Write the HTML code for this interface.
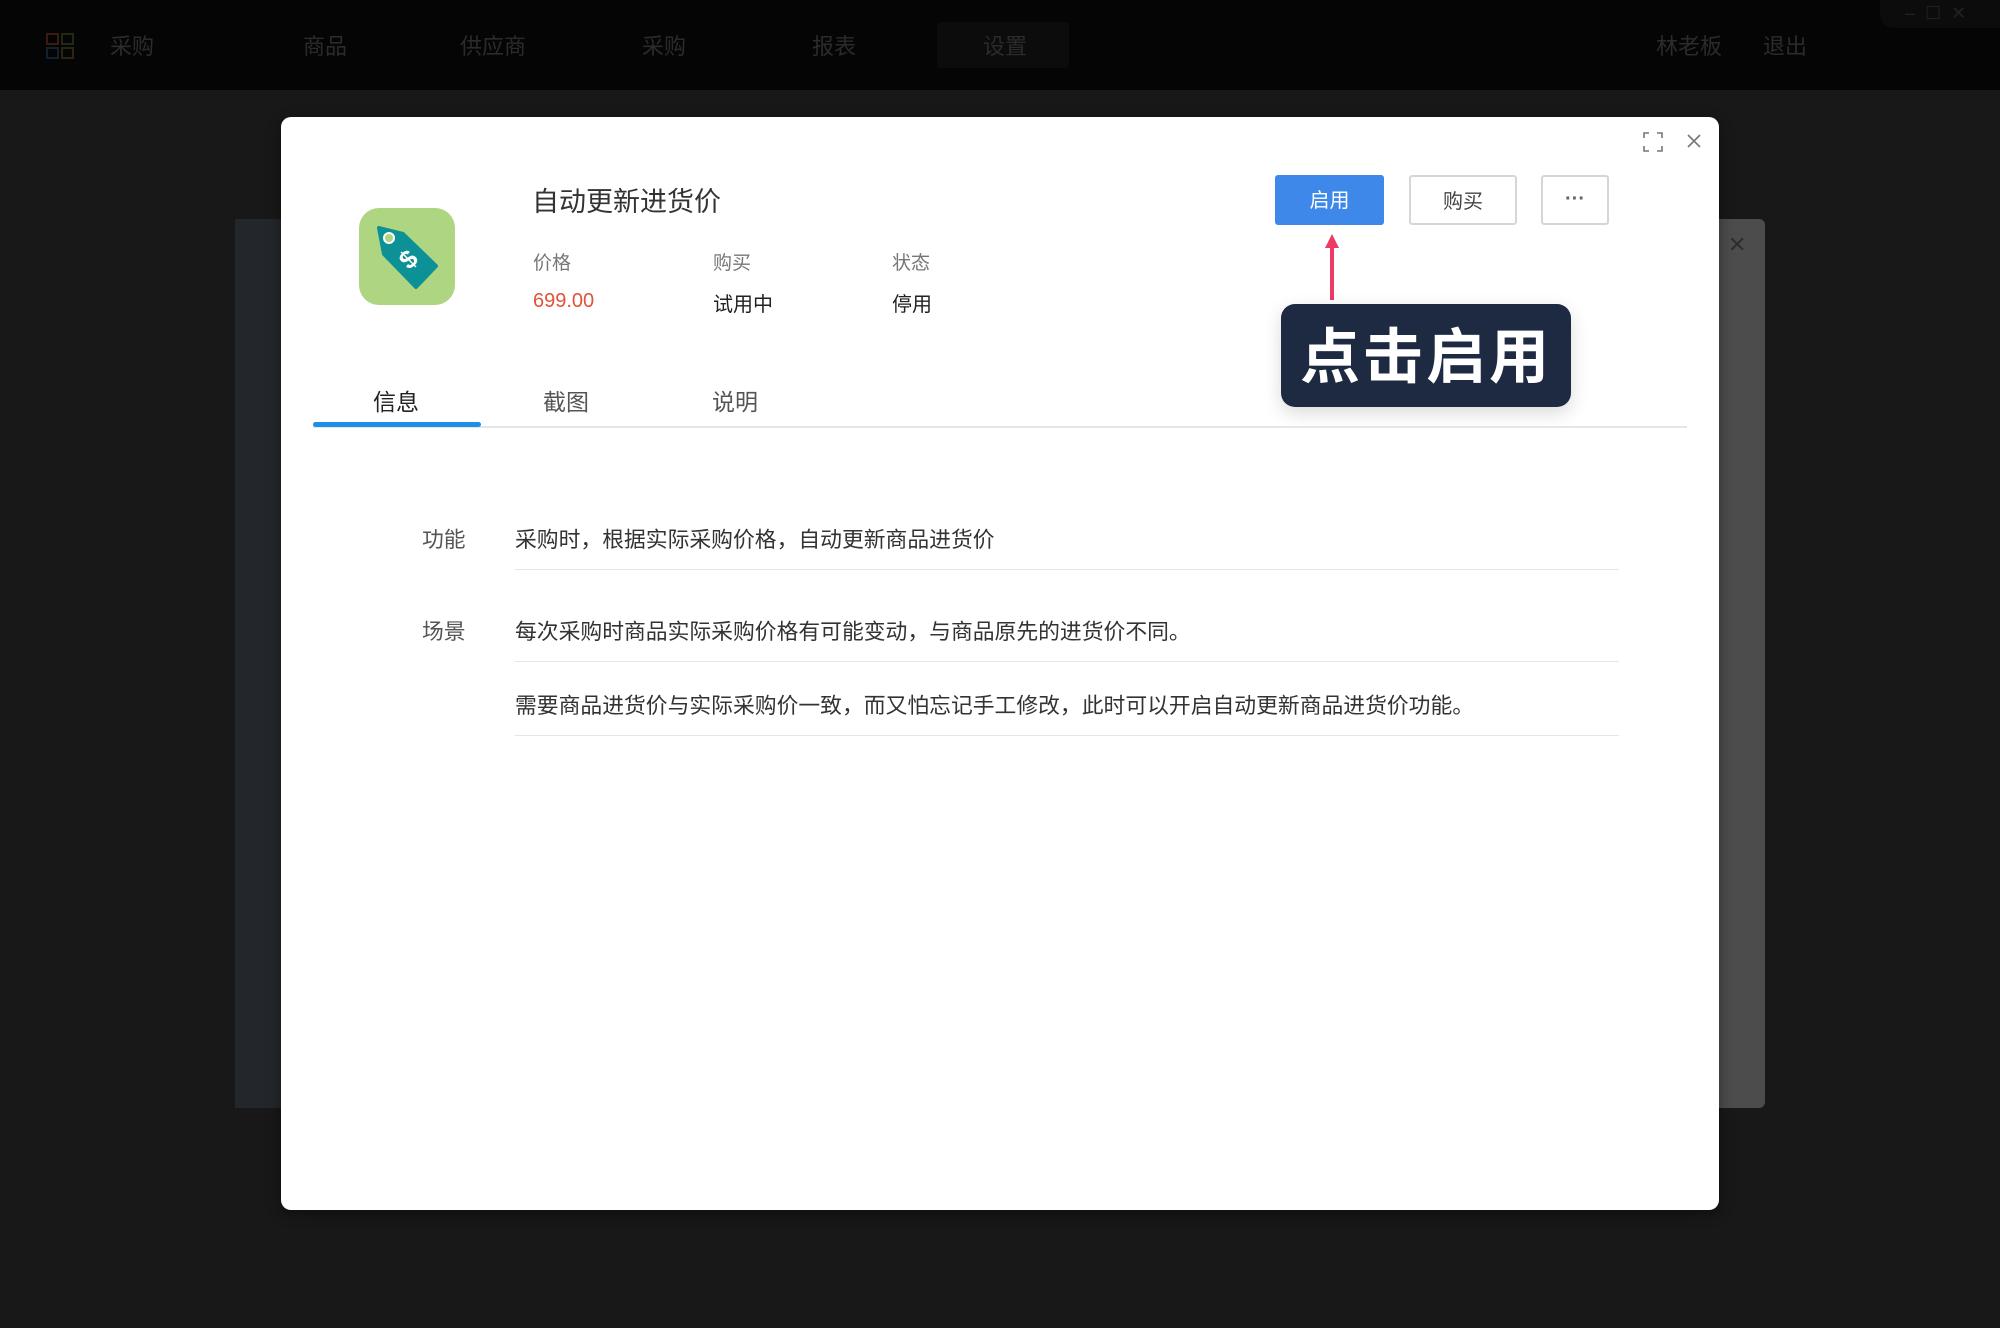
<!DOCTYPE html>
<html><head><meta charset="utf-8"><style>
*{margin:0;padding:0;box-sizing:border-box}
body{width:2000px;height:1328px;background:#181818;position:relative;overflow:hidden;font-family:"Liberation Sans","Noto Sans CJK SC",sans-serif}
.a{position:absolute;white-space:nowrap}
.top{left:0;top:0;width:2000px;height:90px;background:#050505}
.nav{color:#2b2b2b;font-size:22px;top:29px}
.panel{left:235px;top:219px;width:1530px;height:889px;background:#4c4c4c;border-radius:6px}
.panelL{left:235px;top:219px;width:50px;height:889px;background:#23262b}
.modal{left:281px;top:117px;width:1438px;height:1093px;background:#fff;border-radius:10px;box-shadow:0 4px 14px rgba(0,0,0,.4)}
.btn{height:50px;border-radius:3px;font-size:20px;text-align:center;line-height:48px}
.lbl{color:#777;font-size:19px}
.txt{color:#333;font-size:21.8px}
.line{height:1px;background:#e6e6e6;left:515px;width:1104px}
</style></head><body>
<div class="a top"></div>
<svg class="a" style="left:46px;top:33px" width="28" height="26" viewBox="0 0 28 26" fill="none" stroke-width="2"><rect x="1" y="1" width="11" height="10" stroke="#3a1a12"/><rect x="16" y="1" width="11" height="10" stroke="#1e2a12"/><rect x="1" y="15" width="11" height="10" stroke="#10222e"/><rect x="16" y="15" width="11" height="10" stroke="#2e2410"/></svg>
<div class="a nav" style="left:110px">采购</div>
<div class="a nav" style="left:303px">商品</div>
<div class="a nav" style="left:460px">供应商</div>
<div class="a nav" style="left:642px">采购</div>
<div class="a nav" style="left:812px">报表</div>
<div class="a" style="left:937px;top:22px;width:132px;height:46px;background:#0c0c0c;border-radius:4px"></div>
<div class="a nav" style="left:983px">设置</div>
<div class="a nav" style="left:1656px">林老板</div>
<div class="a nav" style="left:1763px">退出</div>
<div class="a" style="left:1880px;top:0;width:120px;height:28px;background:#0c0c0c;border-bottom-left-radius:14px"></div>
<div class="a" style="left:1905px;top:3px;color:#222;font-size:18px">–&nbsp;&nbsp;☐&nbsp;&nbsp;✕</div>
<div class="a panel"></div>
<div class="a panelL"></div>
<div class="a" style="left:1728px;top:232px;color:#2e2e2e;font-size:22px">✕</div>
<div class="a modal"></div>
<svg class="a" style="left:1643px;top:132px" width="20" height="20" viewBox="0 0 20 20" fill="none" stroke="#777" stroke-width="1.6"><path d="M1 6V1h5M14 1h5v5M19 14v5h-5M6 19H1v-5"/></svg>
<svg class="a" style="left:1686px;top:133px" width="16" height="16" viewBox="0 0 16 16" stroke="#777" stroke-width="1.6"><path d="M2 2l12 12M14 2L2 14"/></svg>
<svg class="a" style="left:359px;top:208px" width="96" height="97" viewBox="0 0 96 97">
<rect x="0" y="0" width="96" height="97" rx="20" fill="#aed581"/>
<path d="M20 20 L44 26 L77 58 L57 79 L25 46 Z" fill="#0b9196" stroke="#0b9196" stroke-width="4" stroke-linejoin="round"/>
<circle cx="30" cy="30" r="5" fill="#aed581" stroke="#fff" stroke-width="2"/>
<text x="50" y="60" font-size="26" font-weight="bold" fill="#fff" text-anchor="middle" transform="rotate(-45 50 52)" font-family="Liberation Sans">$</text>
</svg>
<div class="a" style="left:532px;top:180px;font-size:27px;color:#333">自动更新进货价</div>
<div class="a lbl" style="left:533px;top:248px">价格</div>
<div class="a lbl" style="left:713px;top:248px">购买</div>
<div class="a lbl" style="left:892px;top:248px">状态</div>
<div class="a" style="left:533px;top:290px;font-size:20px;color:#e0533a">699.00</div>
<div class="a" style="left:713px;top:288px;font-size:20px;color:#222">试用中</div>
<div class="a" style="left:892px;top:288px;font-size:20px;color:#222">停用</div>
<div class="a btn" style="left:1275px;top:175px;width:109px;background:#3d88e8;color:#fff;border:1px solid #3d88e8;line-height:50px">启用</div>
<div class="a btn" style="left:1409px;top:175px;width:108px;border:2px solid #d6d6d6;color:#444;line-height:50px">购买</div>
<div class="a btn" style="left:1541px;top:175px;width:68px;border:2px solid #d6d6d6;color:#666;line-height:44px;font-weight:bold">···</div>
<div class="a" style="left:1330px;top:244px;width:4px;height:56px;background:#ee3a64"></div>
<svg class="a" style="left:1325px;top:234px" width="14" height="14"><path d="M7 0L14 14H0Z" fill="#ee3a64"/></svg>
<div class="a" style="left:1281px;top:304px;width:290px;height:103px;background:#1d2a42;border-radius:14px;box-shadow:0 6px 18px rgba(0,0,0,.15);color:#fff;font-size:60px;font-weight:bold;text-align:center;line-height:108px;letter-spacing:3px">点击启用</div>
<div class="a" style="left:313px;top:426px;width:1374px;height:2px;background:#e6e6e6"></div>
<div class="a" style="left:313px;top:422px;width:168px;height:5px;background:#1e8fe6;border-radius:3px"></div>
<div class="a" style="left:373px;top:383px;font-size:23px;color:#222">信息</div>
<div class="a" style="left:543px;top:383px;font-size:23px;color:#555">截图</div>
<div class="a" style="left:712px;top:383px;font-size:23px;color:#555">说明</div>
<div class="a txt" style="left:422px;top:523px;color:#555">功能</div>
<div class="a txt" style="left:515px;top:523px">采购时，根据实际采购价格，自动更新商品进货价</div>
<div class="a line" style="top:569px"></div>
<div class="a txt" style="left:422px;top:615px;color:#555">场景</div>
<div class="a txt" style="left:515px;top:615px">每次采购时商品实际采购价格有可能变动，与商品原先的进货价不同。</div>
<div class="a line" style="top:661px"></div>
<div class="a txt" style="left:515px;top:689px">需要商品进货价与实际采购价一致，而又怕忘记手工修改，此时可以开启自动更新商品进货价功能。</div>
<div class="a line" style="top:735px"></div>
</body></html>
